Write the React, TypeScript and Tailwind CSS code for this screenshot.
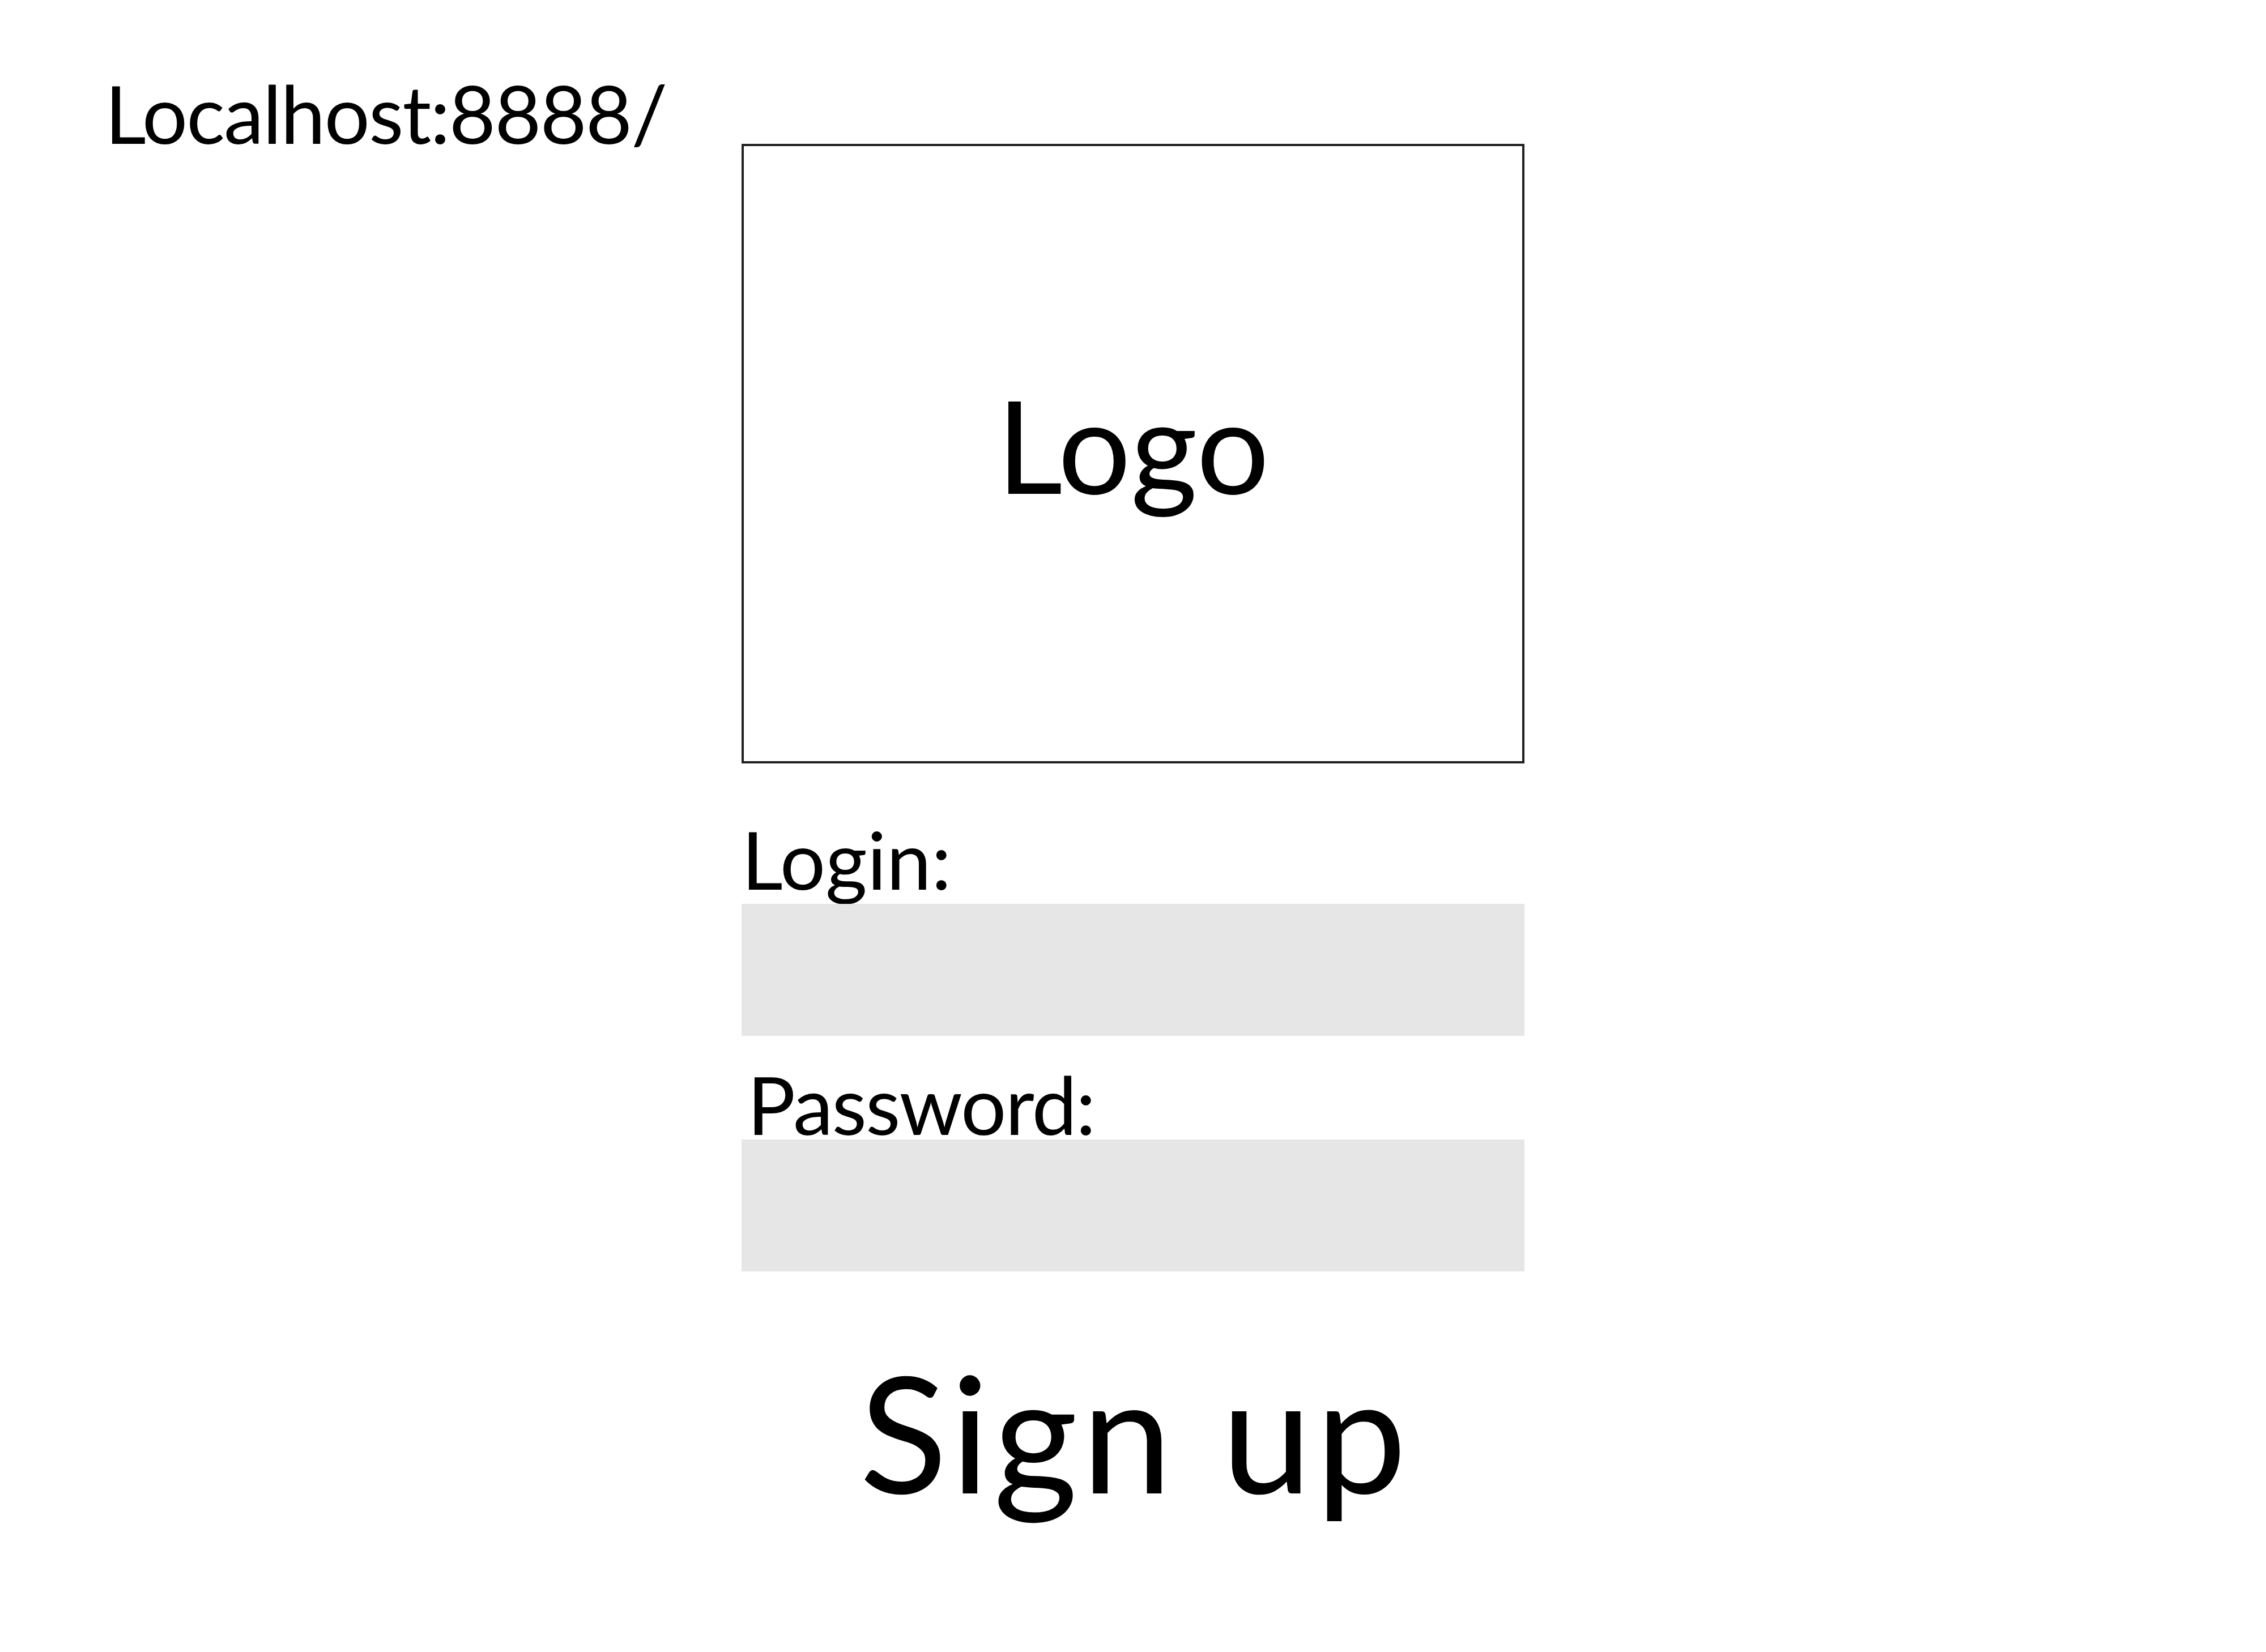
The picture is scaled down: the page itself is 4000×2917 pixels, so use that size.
export default function App() {
  return (
    <div className="min-h-screen bg-white text-black" style={{ fontFamily: "Lato, 'Open Sans', sans-serif" }}>
      <div className="grid grid-cols-[1fr_1382px_1fr]">
        {/* address label on the left */}
        <div className="pl-[185px] pt-[128px]">
          <div className="text-[142px] leading-none tracking-[-2px]">Localhost:8888/</div>
        </div>

        {/* centered login column */}
        <div className="flex flex-col pt-[254px]">
          <div className="h-[1094px] border-4 border-[#231f20] flex justify-center pt-[413px]">
            <div className="text-[227px] leading-none">Logo</div>
          </div>

          <label className="mt-[97px] text-[142px] leading-none">Login:</label>
          <input type="text" aria-label="Login" className="mt-[9px] h-[233px] w-full bg-[#e6e6e6] outline-none" />

          <label className="mt-[49px] ml-[10px] text-[142px] leading-none tracking-[-2px]">Password:</label>
          <input type="password" aria-label="Password" className="mt-[-8px] h-[233px] w-full bg-[#e6e6e6] outline-none" />

          <button className="mt-[139px] self-center pl-[7px] text-[286px] leading-none tracking-[7px]">Sign up</button>
        </div>

        <div />
      </div>
    </div>
  );
}
